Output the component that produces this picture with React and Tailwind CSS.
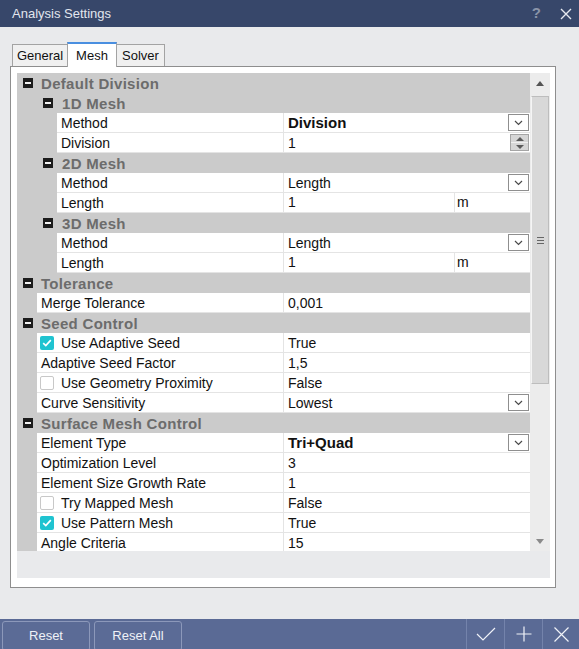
import React from "react";

const rows = [
  { type: "cat", level: 0, label: "Default Division" },
  { type: "cat", level: 1, label: "1D Mesh" },
  { type: "prop", level: 2, label: "Method", value: "Division", bold: true, control: "dropdown" },
  { type: "prop", level: 2, label: "Division", value: "1", control: "spin" },
  { type: "cat", level: 1, label: "2D Mesh" },
  { type: "prop", level: 2, label: "Method", value: "Length", control: "dropdown" },
  { type: "prop", level: 2, label: "Length", value: "1", unit: "m" },
  { type: "cat", level: 1, label: "3D Mesh" },
  { type: "prop", level: 2, label: "Method", value: "Length", control: "dropdown" },
  { type: "prop", level: 2, label: "Length", value: "1", unit: "m" },
  { type: "cat", level: 0, label: "Tolerance" },
  { type: "prop", level: 1, label: "Merge Tolerance", value: "0,001" },
  { type: "cat", level: 0, label: "Seed Control" },
  { type: "prop", level: 1, label: "Use Adaptive Seed", value: "True", check: true },
  { type: "prop", level: 1, label: "Adaptive Seed Factor", value: "1,5" },
  { type: "prop", level: 1, label: "Use Geometry Proximity", value: "False", check: false },
  { type: "prop", level: 1, label: "Curve Sensitivity", value: "Lowest", control: "dropdown" },
  { type: "cat", level: 0, label: "Surface Mesh Control" },
  { type: "prop", level: 1, label: "Element Type", value: "Tri+Quad", bold: true, control: "dropdown" },
  { type: "prop", level: 1, label: "Optimization Level", value: "3" },
  { type: "prop", level: 1, label: "Element Size Growth Rate", value: "1" },
  { type: "prop", level: 1, label: "Try Mapped Mesh", value: "False", check: false },
  { type: "prop", level: 1, label: "Use Pattern Mesh", value: "True", check: true },
  { type: "prop", level: 1, label: "Angle Criteria", value: "15" },
];

const MinusBox = () => (
  <span className="flex h-[10px] w-[10px] items-center justify-center bg-[#1c1c1c]">
    <span className="h-[2px] w-[6px] bg-[#f2f2f2]" />
  </span>
);

const CheckBox = ({ checked }) =>
  checked ? (
    <span className="flex h-[14px] w-[14px] shrink-0 items-center justify-center rounded-[2px] bg-[#1fc3d0]">
      <svg width="10" height="8" viewBox="0 0 10 8">
        <path d="M1.2 4.2 L3.8 6.6 L8.8 1.2" stroke="white" strokeWidth="1.7" fill="none" />
      </svg>
    </span>
  ) : (
    <span className="h-[14px] w-[14px] shrink-0 rounded-[2px] border border-[#c8c8c8] bg-white" />
  );

const Dropdown = () => (
  <span className="ml-auto mr-[1px] flex h-[17px] w-[21px] items-center justify-center border border-[#8f8f8f] bg-white">
    <svg width="9" height="6" viewBox="0 0 9 6">
      <path d="M1 1 L4.5 4.5 L8 1" stroke="#4a4a4a" strokeWidth="1.2" fill="none" />
    </svg>
  </span>
);

const Spin = () => (
  <span className="ml-auto mr-[1px] flex h-[17px] w-[19px] flex-col border border-[#a5a5a5] bg-[#d6d6d6]">
    <span className="flex flex-1 items-center justify-center border-b border-[#f0f0f0]">
      <svg width="8" height="4" viewBox="0 0 8 4"><path d="M0 4 L4 0 L8 4 Z" fill="#5a5a5a" /></svg>
    </span>
    <span className="flex flex-1 items-center justify-center">
      <svg width="8" height="4" viewBox="0 0 8 4"><path d="M0 0 L4 4 L8 0 Z" fill="#5a5a5a" /></svg>
    </span>
  </span>
);

function Row({ r }) {
  if (r.type === "cat") {
    return (
      <div className="flex h-[20px] items-center bg-[#cbcbcb]">
        <div className={r.level === 0 ? "pl-[6px]" : "pl-[26px]"}>
          <MinusBox />
        </div>
        <span className={`${r.level === 0 ? "ml-[8px]" : "ml-[9px]"} text-[15px] font-bold leading-none tracking-[0.3px] text-[#6c6c6c]`}>
          {r.label}
        </span>
      </div>
    );
  }

  return (
    <div className="flex h-[20px]">
      <div className={`${r.level === 1 ? "w-[20px]" : "w-[40px]"} shrink-0 bg-[#cbcbcb]`} />
      <div
        className={`${r.level === 1 ? "w-[247px]" : "w-[227px]"} flex shrink-0 items-center border-b border-r border-[#e4e4e4] bg-white ${
          r.check === undefined ? "pl-[4px]" : "pl-[3px]"
        }`}
      >
        {r.check !== undefined && <CheckBox checked={r.check} />}
        <span className={`${r.check !== undefined ? "ml-[7px]" : ""} whitespace-nowrap text-[14px] leading-none text-[#111]`}>
          {r.label}
        </span>
      </div>
      <div className="flex flex-1 items-center border-b border-[#e4e4e4] bg-white">
        {r.unit ? (
          <>
            <div className="flex h-full w-[171px] items-center border-r border-[#e4e4e4] pl-[4px] text-[14px] text-[#111]">
              {r.value}
            </div>
            <span className="pl-[2px] text-[14px] text-[#111]">{r.unit}</span>
          </>
        ) : (
          <>
            <span className={`pl-[4px] leading-none text-[#111] ${r.bold ? "text-[15px] font-bold" : "text-[14px]"}`}>
              {r.value}
            </span>
            {r.control === "dropdown" && <Dropdown />}
            {r.control === "spin" && <Spin />}
          </>
        )}
      </div>
    </div>
  );
}

const ScrollBar = () => (
  <div className="flex w-[20px] shrink-0 flex-col bg-[#ececec]">
    <div className="flex h-[20px] items-center justify-center">
      <svg width="8" height="5" viewBox="0 0 8 5"><path d="M0 5 L4 0 L8 5 Z" fill="#555" /></svg>
    </div>
    <div className="ml-[1px] mt-[3px] flex h-[288px] w-[18px] items-center justify-center border border-[#bdbdbd] border-l-[#f5f5f5] bg-[#d8d8d8]">
      <div className="flex flex-col gap-[2px]">
        <span className="h-px w-[7px] bg-[#666]" />
        <span className="h-px w-[7px] bg-[#666]" />
        <span className="h-px w-[7px] bg-[#666]" />
      </div>
    </div>
    <div className="flex-1" />
    <div className="flex h-[20px] items-center justify-center">
      <svg width="8" height="5" viewBox="0 0 8 5"><path d="M0 0 L4 5 L8 0 Z" fill="#8a8a8a" /></svg>
    </div>
  </div>
);

const Tab = ({ label, active, className }) => (
  <div
    className={`${className} flex items-center justify-center border-l border-r border-[#a3a3a3] text-[13px] text-[#111] ${
      active
        ? "relative z-10 mb-[-1px] h-[25px] border-t-2 border-t-[#4a8fe0] bg-white"
        : "h-[22px] border-t bg-[#f0f0f0]"
    }`}
  >
    {label}
  </div>
);

export default function App() {
  return (
    <div className="flex h-[649px] w-[579px] flex-col overflow-hidden bg-[#e9eaec] font-[family-name:Liberation_Sans,Arial,sans-serif]">
      {/* title bar */}
      <div className="flex h-[27px] shrink-0 items-center bg-[#37476a] pl-[12px] pr-[7px]">
        <span className="text-[13px] text-[#e2e6ee]">Analysis Settings</span>
        <span className="ml-auto mr-[19px] text-[15px] font-bold text-[#8a94a8]">?</span>
        <svg width="12" height="12" viewBox="0 0 12 12">
          <path d="M1 1 L11 11 M11 1 L1 11" stroke="#e6e9f0" strokeWidth="1.4" />
        </svg>
      </div>

      {/* body */}
      <div className="flex h-[592px] shrink-0 flex-col px-[10px] pt-[15px]">
        <div className="flex h-[24px] items-end pl-[2px]">
          <Tab label="General" className="w-[56px]" />
          <Tab label="Mesh" active className="-ml-px w-[50px]" />
          <Tab label="Solver" className="-ml-px w-[49px]" />
        </div>
        <div className="flex h-[522px] w-[546px] flex-col border border-[#8e8e8e] bg-white pb-[9px] pl-[6px] pr-[5px] pt-[6px]">
          <div className="flex h-[478px]">
            <div className="flex-1 overflow-hidden">
              {rows.map((r, i) => (
                <Row key={i} r={r} />
              ))}
            </div>
            <ScrollBar />
          </div>
          <div className="h-[27px] bg-[#e9eaec]" />
        </div>
      </div>

      {/* bottom bar */}
      <div className="flex h-[30px] shrink-0 items-start overflow-hidden bg-[#5a6a95]">
        <div className="flex gap-[4px] pl-[2px] pt-[2px]">
          <button className="h-[30px] w-[88px] rounded-[3px] border border-[#8c98ba] bg-[#5b6b96] text-[13px] text-[#eef1f7]">
            Reset
          </button>
          <button className="h-[30px] w-[88px] rounded-[3px] border border-[#8c98ba] bg-[#5b6b96] text-[13px] text-[#eef1f7]">
            Reset All
          </button>
        </div>
        <div className="ml-auto flex h-full">
          <div className="flex h-full w-[38px] items-center justify-center border-l border-[#7483ab]">
            <svg width="20" height="14" viewBox="0 0 20 14">
              <path d="M1 7 L7 13 L19 1" stroke="#f0f2f8" strokeWidth="1.2" fill="none" />
            </svg>
          </div>
          <div className="flex h-full w-[38px] items-center justify-center border-l border-[#7483ab]">
            <svg width="16" height="16" viewBox="0 0 16 16">
              <path d="M8 0.5 L8 15.5 M0.5 8 L15.5 8" stroke="#f0f2f8" strokeWidth="1.2" />
            </svg>
          </div>
          <div className="flex h-full w-[37px] items-center justify-center border-l border-[#7483ab]">
            <svg width="15" height="15" viewBox="0 0 15 15">
              <path d="M0.5 0.5 L14.5 14.5 M14.5 0.5 L0.5 14.5" stroke="#f0f2f8" strokeWidth="1.2" />
            </svg>
          </div>
        </div>
      </div>
    </div>
  );
}
